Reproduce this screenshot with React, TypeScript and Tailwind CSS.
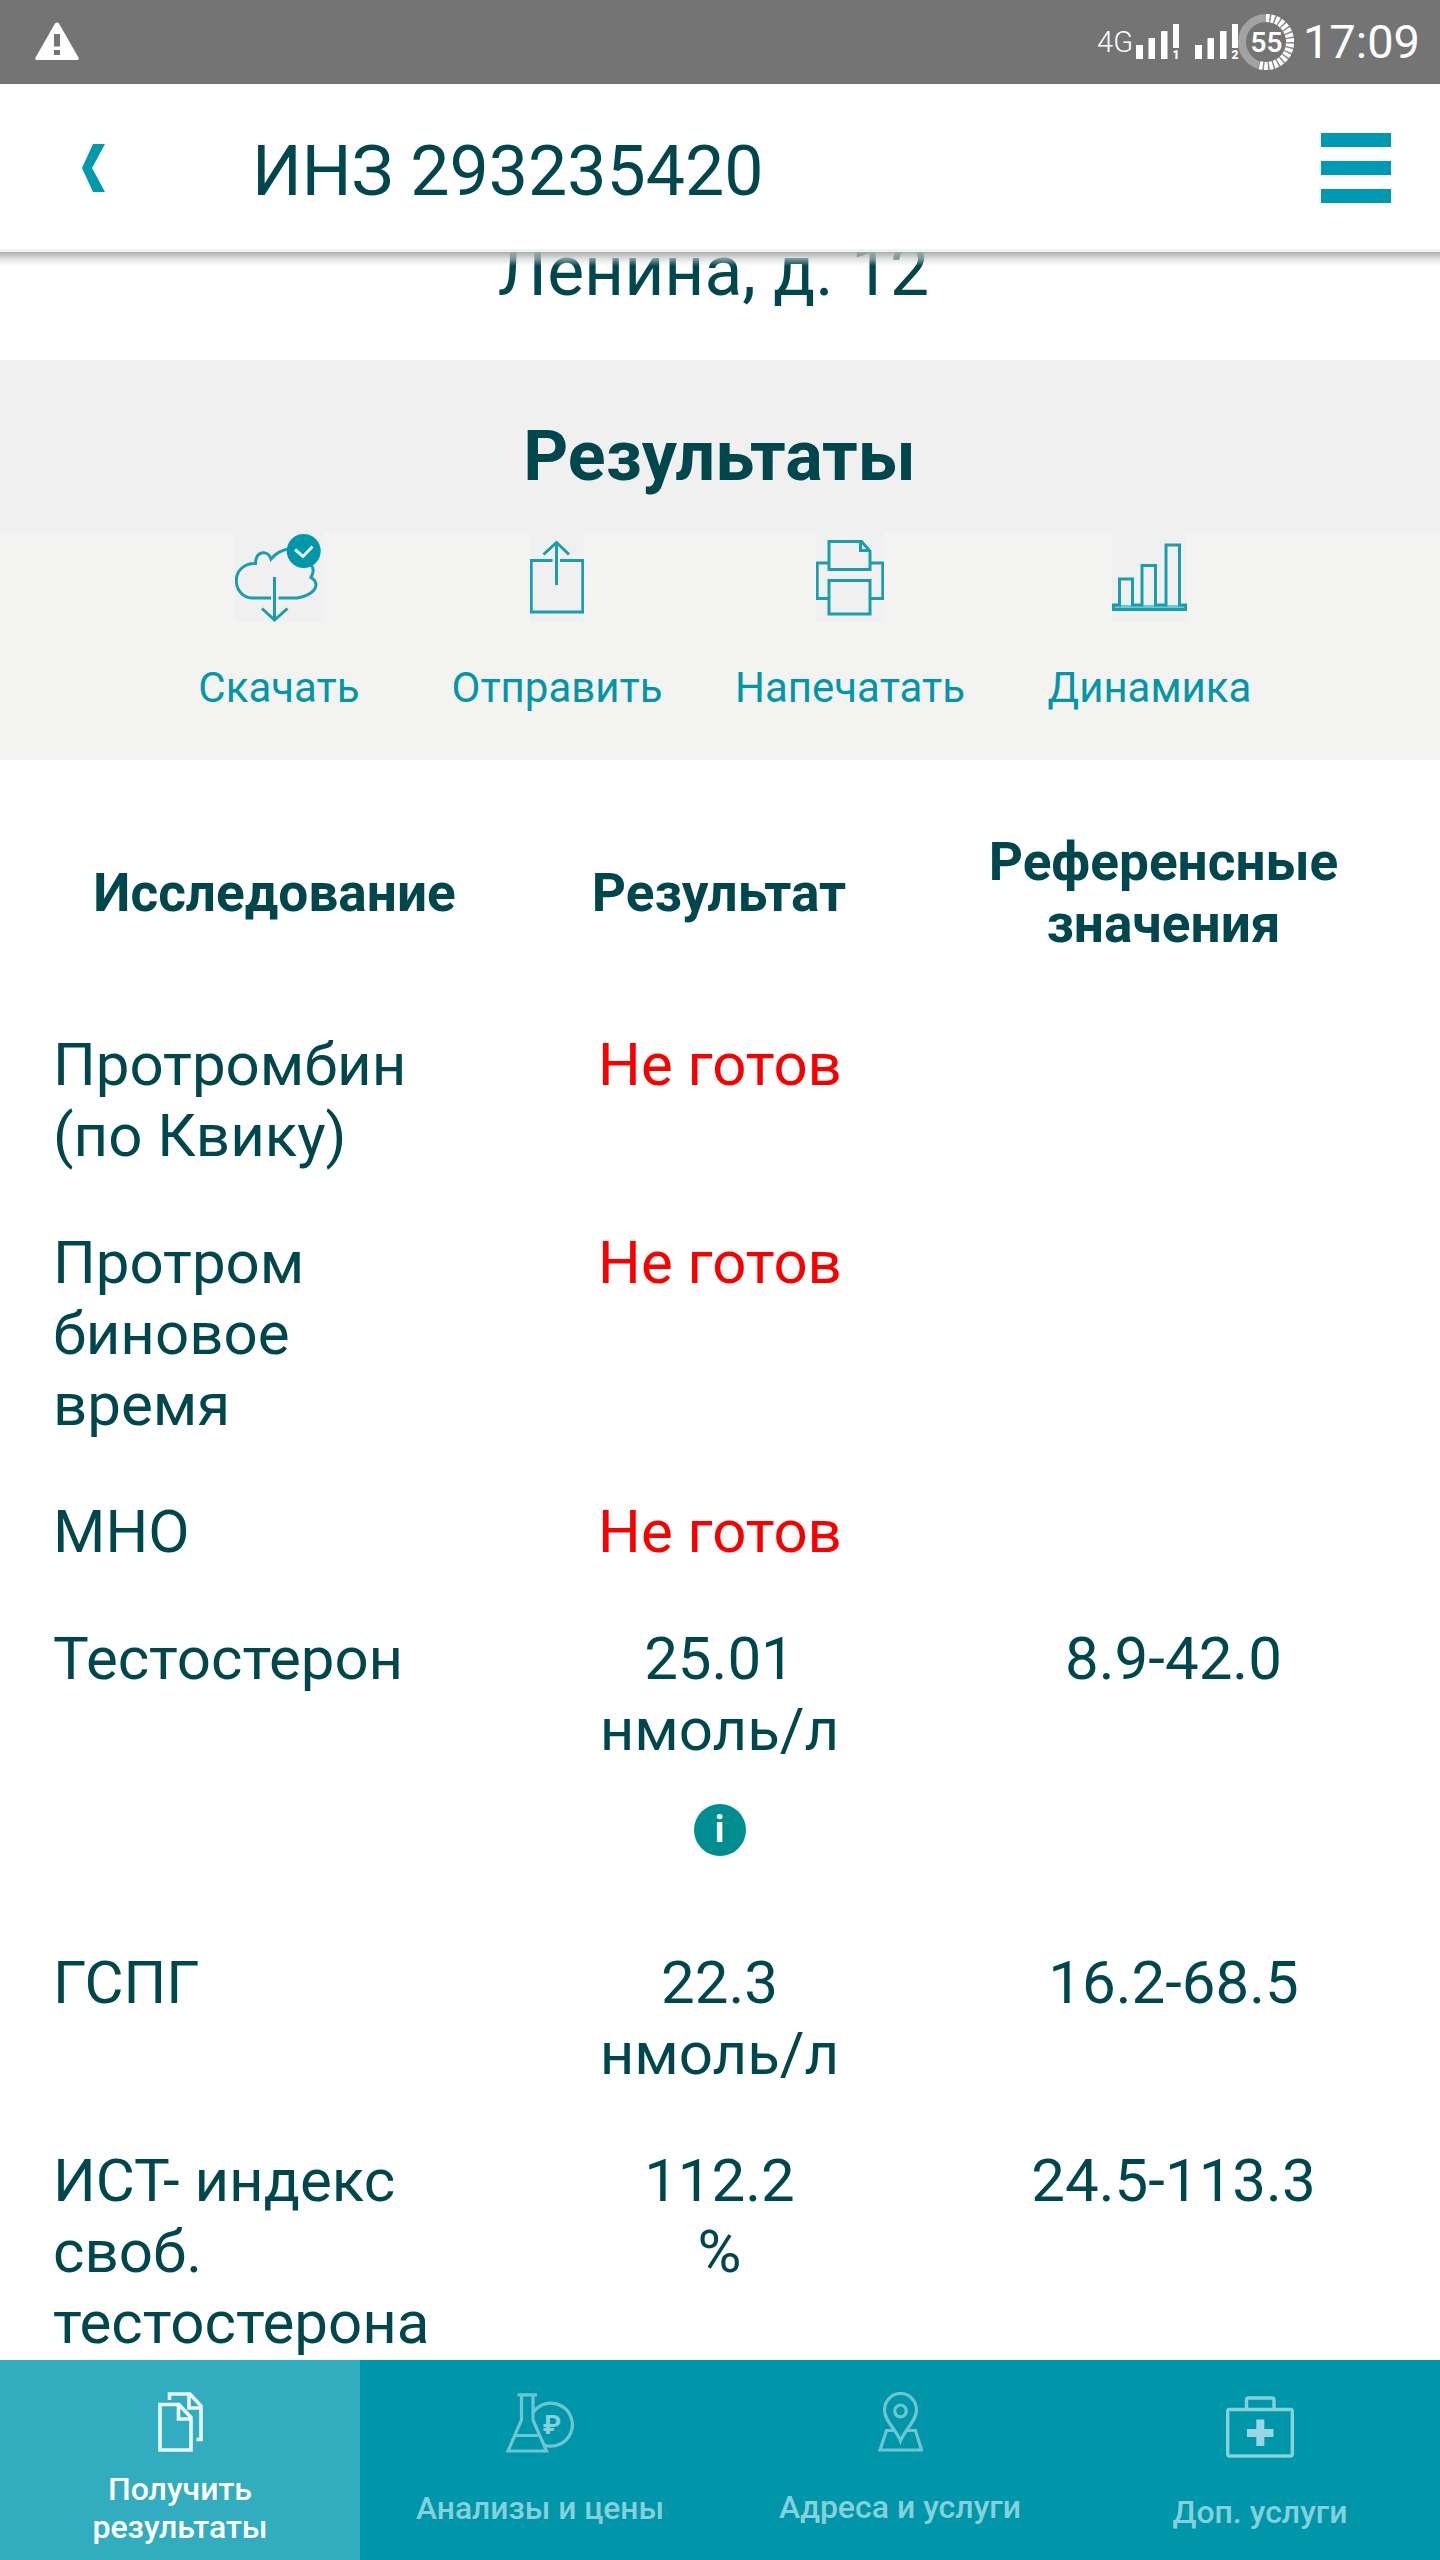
import type { ReactNode } from "react";

type ResultRow = {
  name: string[];
  result: string[];
  reference?: string;
  pending?: boolean;
  info?: boolean;
};

const rows: ResultRow[] = [
  { name: ["Протромбин", "(по Квику)"], result: ["Не готов"], pending: true },
  { name: ["Протром", "биновое", "время"], result: ["Не готов"], pending: true },
  { name: ["МНО"], result: ["Не готов"], pending: true },
  { name: ["Тестостерон"], result: ["25.01", "нмоль/л"], reference: "8.9-42.0", info: true },
  { name: ["ГСПГ"], result: ["22.3", "нмоль/л"], reference: "16.2-68.5" },
  { name: ["ИСТ- индекс", "своб.", "тестостерона"], result: ["112.2", "%"], reference: "24.5-113.3" },
];

function Signal({ sim }: { sim: string }) {
  return (
    <svg width="43" height="36" viewBox="0 0 43 36" fill="#fff" className="overflow-visible">
      <rect x="0" y="21" width="7" height="14" />
      <rect x="12.5" y="14" width="6.5" height="21" />
      <rect x="25" y="7" width="6.5" height="28" />
      <rect x="37" y="0" width="6" height="24" />
      <text x="40" y="35" fontSize="12" fontWeight="900" textAnchor="middle">
        {sim}
      </text>
    </svg>
  );
}

function Battery() {
  // 55% of the ring circumference is ticked, starting at 12 o'clock
  return (
    <svg width="56" height="56" viewBox="0 0 56 56" fill="none">
      <circle cx="28" cy="28" r="24" stroke="#a2a2a2" strokeWidth="8" />
      <path d="M28 4A24 24 0 1 1 20.6 50.8" stroke="#8a8a8a" strokeWidth="8" />
      <path d="M28 4A24 24 0 1 1 20.6 50.8" stroke="#fff" strokeWidth="8" strokeDasharray="3.4 1.5" />
      <text x="28.500" y="38" fontSize="28" fontWeight="600" fill="#fff" textAnchor="middle">
        55
      </text>
    </svg>
  );
}

function StatusBar() {
  return (
    <div className="flex h-[84px] items-center bg-[#747474] pr-5 pl-[34px] text-white">
      <svg width="46" height="40" viewBox="0 0 46 40" className="-mt-[2px]">
        <path d="M21 2.5Q23 .3 25 2.5L44.7 37Q45 39 43.5 39H2.5Q1 39 1.3 37Z" fill="#fff" />
        <path d="M20 13h6v12.500h-6zM20 29h6v5h-6z" fill="#747474" />
      </svg>
      <div className="ml-auto flex items-center">
        <span className="mr-[3px] text-[29px] leading-[32px] font-light">4G</span>
        <Signal sim="1" />
        <div className="w-4" />
        <Signal sim="2" />
        <Battery />
        <span className="ml-[8px] w-[118px] text-right text-[47px] leading-[54px]">17:09</span>
      </div>
    </div>
  );
}

function Header() {
  return (
    <header className="relative z-10 flex h-[168px] items-center border-b-[3px] border-[#f1f1f1] bg-white">
      <svg width="24" height="50" viewBox="0 0 24 50" className="mt-[3px] ml-[82px]">
        <path d="M11 1H23L10 25L23 49H11L0 25Z" fill="#0099ae" />
      </svg>
      <h1 className="mt-[8px] ml-[146px] text-[69.8px] leading-[82px]">ИНЗ 293235420</h1>
      <div className="mt-[3px] mr-[49px] ml-auto flex w-[70px] flex-col gap-[14px]">
        <span className="h-[14px] bg-[#0099b3]" />
        <span className="h-[14px] bg-[#0099b3]" />
        <span className="h-[14px] bg-[#0099b3]" />
      </div>
      <div className="absolute inset-x-0 top-[168px] h-[14px] bg-linear-to-b from-[#a5aaa8]/95 via-[#cdd0cf]/60 to-white/0" />
    </header>
  );
}

function Action({ label, width, iconWidth, children }: { label: string; width: string; iconWidth: number; children: ReactNode }) {
  return (
    <button className={`flex flex-col items-center ${width}`}>
      <svg
        width={iconWidth}
        height="89"
        viewBox={`0 0 ${iconWidth} 89`}
        fill="none"
        stroke="#1c9dae"
        strokeWidth="3"
        className="bg-[#f0f0f0]"
      >
        {children}
      </svg>
      <span className="mt-[41px] text-[42px] leading-[49px] text-[#0495a8]">{label}</span>
    </button>
  );
}

function Actions() {
  return (
    <div className="flex h-[227px] bg-[#f3f3f1] pl-[140px]">
      <Action label="Скачать" width="w-[278px]" iconWidth={89}>
        <path d="M36 65H17C8 65 1.300 57 1.300 47.500C1.300 38 9 30 20.500 30.500C21 17 33 17 36 26C41 20 46 17 54 16M76 32C79 35 79 39 76 44.500C82 48 82 53 79 57C75 62 68 64 62 65H43.500" />
        <path d="M39.500 44V87M27 75.500L39.500 87L52.500 75.500" />
        <circle cx="68.700" cy="18" r="17" fill="#0097aa" stroke="none" />
        <path d="M60 16.500L68 23.500L77.500 13.500" stroke="#e8f5f6" />
      </Action>
      <Action label="Отправить" width="w-[278px]" iconWidth={54}>
        <path d="M22.500 27.500H1.200V79H52.800V27.500H30" />
        <path d="M26.500 9V52M13.500 21.500L26.500 9.500L39 21.500" />
      </Action>
      <Action label="Напечатать" width="w-[308px]" iconWidth={68}>
        <path d="M13 8.500H45.500L54 18V36.500H13ZM44.500 8.500V17.500H54M13 47.500H54V81H13Z" />
        <path d="M13 30H1.200V65.500H13M54 30H66.800V65.500H54" />
      </Action>
      <Action label="Динамика" width="w-[291px]" iconWidth={75}>
        <path d="M1 72H74V76.500H1Z" fill="#66cbd8" stroke="none" />
        <path d="M1.200 76.500V72H7.500V46H20.500V72H30V32.500H43.500V72H54V12H67.500V72H73.800V76.500Z" />
      </Action>
    </div>
  );
}

function ResultsTable() {
  return (
    <div className="pr-[35px] pl-[53px]">
      <div className="grid grid-cols-[443px_446px_443px] items-center pt-[71px] pb-[46px] text-center text-[53.200px] leading-[62px] font-bold">
        <div>Исследование</div>
        <div>Результат</div>
        <div>
          Референсные
          <br />
          значения
        </div>
      </div>
      {rows.map((row) => (
        <div key={row.name[0]} className="grid grid-cols-[443px_447px_461px] py-[28px] text-[60px] leading-[71px]">
          <div>
            {row.name.map((line) => (
              <div key={line}>{line}</div>
            ))}
          </div>
          <div className={`text-center ${row.pending ? "pl-px text-[#f80000]" : ""}`}>
            {row.result.map((line) => (
              <div key={line}>{line}</div>
            ))}
            {row.info && (
              <div className="flex h-[126px] justify-center pt-[39px]">
                <span className="flex size-[52px] items-center justify-center rounded-full bg-[#008d8f] text-[36px] leading-[52px] font-bold text-white">
                  i
                </span>
              </div>
            )}
          </div>
          <div className="text-center">{row.reference}</div>
        </div>
      ))}
    </div>
  );
}

function BottomNav() {
  return (
    <nav className="grid h-[200px] grid-cols-4 bg-[#0096aa] text-center text-[32px] leading-[38px] font-medium text-[#84d1dc]">
      <div className="flex flex-col items-center bg-[#32adc0] pt-8 text-white">
        <svg width="45" height="60" viewBox="0 0 45 60" fill="none" stroke="#e9f8fa" strokeWidth="3.600">
          <path d="M2 12.500H21L33 25.500V58H2ZM20.500 12.500V27H33" />
          <path d="M11.500 8V2H32L43 14V47.500H38.500M31 2V16H43" />
        </svg>
        <div className="mt-[18px]">
          Получить
          <br />
          результаты
        </div>
      </div>
      <div className="flex flex-col items-center pt-[33px]">
        <svg width="68" height="60" viewBox="0 0 68 60" fill="none" stroke="#6cc5d0" strokeWidth="3.200">
          <path d="M11.500 1.800H31M15.500 2V27L2 58H40.500L27 27V2M8.500 42.500H34" />
          <path d="M27.500 19A21.500 21.500 0 1 1 38.500 52.200" />
          <text x="46" y="41" fontSize="26" fontWeight="700" fill="#84d1dc" stroke="none" textAnchor="middle">
            ₽
          </text>
        </svg>
        <div className="mt-[36px] text-[31.800px]">Анализы и цены</div>
      </div>
      <div className="flex flex-col items-center pt-8">
        <svg width="45" height="60" viewBox="0 0 45 60" fill="none" stroke="#6cc5d0" strokeWidth="3.200">
          <path d="M22.500 49C18 37 6.500 29 6.500 18A16 16.500 0 0 1 38.500 18C38.500 29 27 37 22.500 49Z" />
          <circle cx="22.500" cy="19" r="5.800" />
          <path d="M16 38.500H8.500L2 58H43.500L37.500 38.500H29" />
        </svg>
        <div className="mt-[36px]">Адреса и услуги</div>
      </div>
      <div className="flex flex-col items-center pt-9">
        <svg width="68" height="62" viewBox="0 0 68 62" fill="none" stroke="#84d1dc" strokeWidth="3.400">
          <rect x="1.700" y="13.500" width="64.600" height="46.500" rx="2" />
          <path d="M20.500 13V4Q20.500 2 22.500 2H46Q48 2 48 4V13" />
          <path d="M34.300 23.500V50M21 37H47.500" stroke="#9ad6e2" strokeWidth="8" />
        </svg>
        <div className="mt-[35px]">Доп. услуги</div>
      </div>
    </nav>
  );
}

export default function App() {
  return (
    <div className="flex h-[2560px] w-[1440px] flex-col overflow-hidden bg-white font-[Roboto,sans-serif] text-[#00474d]">
      <StatusBar />
      <Header />
      <main className="min-h-0 flex-1 overflow-hidden">
        <p className="-mt-[22px] h-[130px] pr-[13px] text-center text-[69.600px] leading-[82px]">Ленина, д. 12</p>
        <h2 className="h-[173px] bg-[#f0f0f0] pt-[55px] pr-px text-center text-[70px] leading-[82px] font-bold">Результаты</h2>
        <Actions />
        <ResultsTable />
      </main>
      <BottomNav />
    </div>
  );
}
